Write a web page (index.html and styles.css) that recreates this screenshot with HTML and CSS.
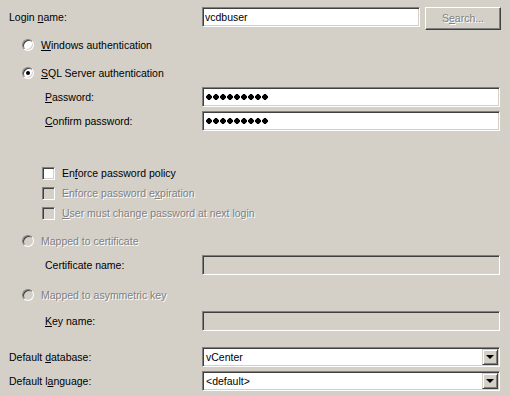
FILE: index.html
```html
<!DOCTYPE html>
<html lang="en">
<head>
    <meta charset="UTF-8">
    <title>Login - General</title>
    <link rel="stylesheet" href="styles.css">
</head>
<body>
    <div class="dialog">
        <div class="row">
            <div class="lbl">Login <u>n</u>ame:</div>
            <div class="login-fields">
                <div class="textbox login-box">vcdbuser</div>
                <div class="btn disabled">S<u>e</u>arch...</div>
            </div>
        </div>

        <div class="option gap-8">
            <span class="radio"></span>
            <span><u>W</u>indows authentication</span>
        </div>
        <div class="option gap-8">
            <span class="radio checked"></span>
            <span><u>S</u>QL Server authentication</span>
        </div>

        <div class="row gap-4">
            <div class="lbl indent"><u>P</u>assword:</div>
            <div class="textbox"><span class="dots"></span></div>
        </div>
        <div class="row gap-4">
            <div class="lbl indent"><u>C</u>onfirm password:</div>
            <div class="textbox"><span class="dots"></span></div>
        </div>

        <div class="check gap-32">
            <span class="checkbox"></span>
            <span>En<u>f</u>orce password policy</span>
        </div>
        <div class="check">
            <span class="checkbox disabled"></span>
            <span class="muted">Enforce password e<u>x</u>piration</span>
        </div>
        <div class="check">
            <span class="checkbox disabled"></span>
            <span class="muted"><u>U</u>ser must change password at next login</span>
        </div>

        <div class="option gap-8">
            <span class="radio disabled"></span>
            <span class="muted">Mapped to certificate</span>
        </div>
        <div class="row gap-4">
            <div class="lbl indent">Certificate name:</div>
            <div class="textbox disabled"></div>
        </div>

        <div class="option gap-10">
            <span class="radio disabled"></span>
            <span class="muted">Mapped to asymmetric key</span>
        </div>
        <div class="row gap-6">
            <div class="lbl indent"><u>K</u>ey name:</div>
            <div class="textbox disabled"></div>
        </div>

        <div class="row gap-16">
            <div class="lbl">Default <u>d</u>atabase:</div>
            <div class="textbox combo">
                <span class="combo-text">vCenter</span>
                <span class="combo-btn"><span class="arrow"></span></span>
            </div>
        </div>
        <div class="row gap-4">
            <div class="lbl">Default l<u>a</u>nguage:</div>
            <div class="textbox combo">
                <span class="combo-text">&lt;default&gt;</span>
                <span class="combo-btn"><span class="arrow"></span></span>
            </div>
        </div>
    </div>
</body>
</html>
```

FILE: styles.css
```css
body {
    margin: 0;
    background-color: #d4d0c8;
    color: #000;
    font-family: "Liberation Sans", Arial, sans-serif;
    font-size: 10.5px;
}
u {
    text-decoration-thickness: 1px;
    text-underline-offset: 1px;
}
.dialog {
    padding: 7px 10px 0 0;
}
.row {
    display: grid;
    grid-template-columns: 202px 1fr;
    height: 20px;
    line-height: 20px;
}
.lbl {
    padding-left: 9px;
}
.lbl.indent {
    padding-left: 45px;
}
.gap-4 { margin-top: 4px; }
.gap-6 { margin-top: 6px; }
.gap-8 { margin-top: 8px; }
.gap-10 { margin-top: 10px; }
.gap-16 { margin-top: 16px; }
.gap-32 { margin-top: 32px; }

/* sunken 3d field */
.textbox {
    box-sizing: border-box;
    height: 20px;
    line-height: 18px;
    padding-left: 2px;
    background-color: #fff;
    border: 1px solid;
    border-color: #808080 #fff #fff #808080;
    box-shadow: inset 1px 1px 0 #404040, inset -1px -1px 0 #d4d0c8;
}
.textbox.disabled {
    background-color: #d4d0c8;
}
.login-fields {
    display: flex;
    align-items: flex-start;
    gap: 5px;
}
.login-box {
    width: 218px;
}
.btn {
    box-sizing: border-box;
    width: 76px;
    height: 23px;
    line-height: 20px;
    text-align: center;
    background-color: #d4d0c8;
    border: 1px solid;
    border-color: #fff #404040 #404040 #fff;
    box-shadow: inset -1px -1px 0 #808080;
}
.disabled,
.muted {
    color: #808080;
    text-shadow: 1px 1px 0 #fff;
}
.dots {
    display: inline-block;
    width: 63px;
    height: 6px;
    margin: 6px 0 0 1px;
    vertical-align: top;
    background: radial-gradient(circle at 3px 3px, #000 2.6px, transparent 3px) 0 0 / 7px 6px repeat-x;
}

.option,
.check {
    display: flex;
    align-items: center;
    gap: 7px;
    height: 20px;
    line-height: 20px;
}
.option {
    padding-left: 22px;
}
.check {
    padding-left: 42px;
}
.radio,
.checkbox {
    position: relative;
    box-sizing: border-box;
    flex: none;
    background-color: #fff;
    border: 1px solid;
    border-color: #808080 #fff #fff #808080;
    box-shadow: inset 1px 1px 0 #404040, inset -1px -1px 0 #d4d0c8;
}
.radio {
    width: 12px;
    height: 12px;
    border-radius: 50%;
}
.checkbox {
    width: 13px;
    height: 13px;
}
.radio.disabled,
.checkbox.disabled {
    background-color: #d4d0c8;
}
.radio.checked::after {
    content: "";
    position: absolute;
    left: 3px;
    top: 3px;
    width: 4px;
    height: 4px;
    border-radius: 50%;
    background-color: #000;
}

.combo {
    display: flex;
    padding: 1px;
}
.combo-text {
    flex: 1;
    padding-left: 2px;
    line-height: 16px;
}
.combo-btn {
    box-sizing: border-box;
    display: flex;
    align-items: center;
    justify-content: center;
    width: 16px;
    height: 16px;
    background-color: #d4d0c8;
    border: 1px solid;
    border-color: #d4d0c8 #404040 #404040 #d4d0c8;
    box-shadow: inset 1px 1px 0 #fff, inset -1px -1px 0 #808080;
}
.arrow {
    width: 0;
    height: 0;
    border-left: 4px solid transparent;
    border-right: 4px solid transparent;
    border-top: 4px solid #000;
    margin-left: -1px;
}
```
